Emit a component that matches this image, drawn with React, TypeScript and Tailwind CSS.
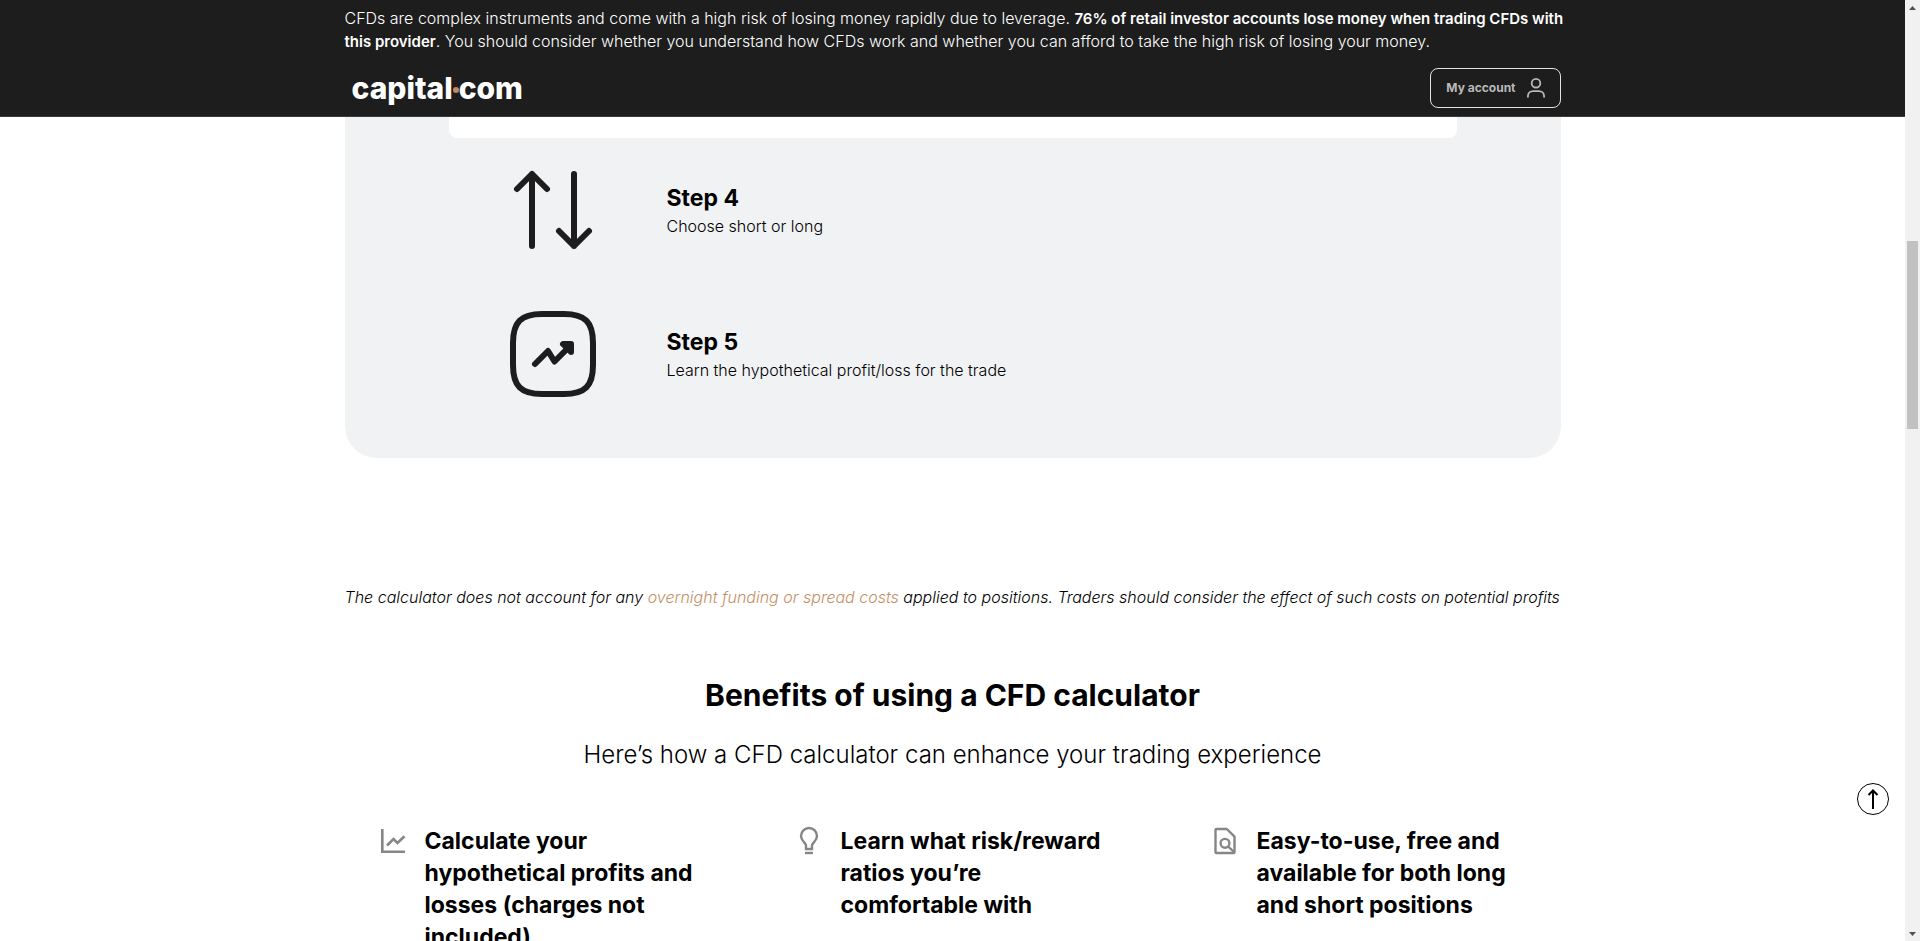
import type { ReactNode } from "react";

const CONTAINER = "mx-auto w-full max-w-[1216px]";

function Logo() {
  return (
    <a
      href="#home"
      aria-label="capital.com"
      className="flex items-center pl-[7px] text-[30px] leading-10 font-extrabold text-white"
    >
      capital
      <span className="mt-1 size-1.5 rounded-full bg-[#c48a5a]" />
      com
    </a>
  );
}

function Header() {
  return (
    <header className="shrink-0 border-b border-[#3a3a3a] bg-[#1d1d1d] pt-[7px] pb-2 text-white">
      <div className={CONTAINER}>
        <p className="text-base leading-[22px] font-light whitespace-nowrap">
          CFDs are complex instruments and come with a high risk of losing money rapidly due to leverage.{" "}
          <b className="text-[15px] font-semibold">
            76% of retail investor accounts lose money when trading CFDs with
            <br />
            this provider
          </b>
          . You should consider whether you understand how CFDs work and whether you can afford to take the high risk
          of losing your money.
        </p>
        <div className="mt-[15px] flex items-start justify-between">
          <Logo />
          <button
            type="button"
            className="flex h-10 items-center gap-2 rounded-lg border border-[#e2e2e2] pr-3 pl-[15px] text-xs font-bold text-[#b9b9b9]"
          >
            My account
            <svg viewBox="0 0 24 24" className="size-6" fill="none" stroke="currentColor" strokeWidth="1.8">
              <circle cx="12" cy="7.2" r="4.3" />
              <path d="M3.9 21.5v-1.2c0-3.2 2.4-5.2 5.2-5.2h5.8c2.8 0 5.2 2 5.2 5.2v1.2" />
            </svg>
          </button>
        </div>
      </div>
    </header>
  );
}

function Step({ icon, title, text }: { icon: ReactNode; title: string; text: string }) {
  return (
    <li className="flex items-center gap-[66px]">
      {icon}
      <div>
        <h3 className="text-[23px] leading-8 font-bold">{title}</h3>
        <p className="text-base leading-6 font-light">{text}</p>
      </div>
    </li>
  );
}

function ArrowsIcon() {
  return (
    <svg
      viewBox="0 0 96 96"
      className="size-24"
      fill="none"
      stroke="#1d1d1d"
      strokeWidth="6"
      strokeLinecap="round"
      strokeLinejoin="round"
    >
      <path d="M27 84V12M12 27l15-15 15 15" />
      <path d="M69 12v72M54 69l15 15 15-15" />
    </svg>
  );
}

function ChartBoxIcon() {
  return (
    <svg
      viewBox="0 0 96 96"
      className="size-24"
      fill="none"
      stroke="#1d1d1d"
      strokeWidth="6"
      strokeLinecap="round"
      strokeLinejoin="round"
    >
      <path d="M37 8h22C80 8 88 16 88 37v22c0 21-8 29-29 29H37C16 88 8 80 8 59V37C8 16 16 8 37 8Z" />
      <path d="M30 58l13-13 6.500 10.500L65 40" />
      <path d="M58 38h8v8z" fill="#1d1d1d" />
    </svg>
  );
}

const GREY_ICON = "size-8 shrink-0 text-[#868686]";

const FEATURES: { icon: ReactNode; lines: string[] }[] = [
  {
    icon: (
      <svg viewBox="0 0 32 32" className={GREY_ICON} fill="none" stroke="currentColor" strokeWidth="2.600">
        <path d="M5.300 4v22.700H28M10 20.500l6.500-6.500 4 4L27.500 11.300" />
      </svg>
    ),
    lines: ["Calculate your", "hypothetical profits and", "losses (charges not", "included)"],
  },
  {
    icon: (
      <svg viewBox="0 0 32 32" className={GREY_ICON} fill="none" stroke="currentColor" strokeWidth="2.400">
        <path d="M13 24v-3.500c0-2.500-5-4.500-5-9.500a8 8 0 0 1 16 0c0 5-5 7-5 9.500V24Z" />
        <path d="M12 28h8" />
      </svg>
    ),
    lines: ["Learn what risk/reward", "ratios you’re", "comfortable with"],
  },
  {
    icon: (
      <svg viewBox="0 0 32 32" className={GREY_ICON} fill="none" stroke="currentColor" strokeWidth="2.400">
        <path strokeLinejoin="round" d="M7.500 4h10.300l7.700 7.700V27a1 1 0 0 1-1 1h-17a1 1 0 0 1-1-1V5a1 1 0 0 1 1-1Z" />
        <circle cx="16" cy="18.300" r="4.400" />
        <path d="M19 21.300l6 5.700" />
      </svg>
    ),
    lines: ["Easy-to-use, free and", "available for both long", "and short positions"],
  },
];

function Feature({ icon, lines }: { icon: ReactNode; lines: string[] }) {
  return (
    <li className="flex items-start gap-4 px-8">
      {icon}
      <h3 className="text-[23px] leading-8 font-bold whitespace-nowrap">
        {lines.map((line) => (
          <span key={line} className="block">
            {line}
          </span>
        ))}
      </h3>
    </li>
  );
}

function Scrollbar() {
  return (
    <div aria-hidden="true" className="flex w-[15px] shrink-0 flex-col items-center justify-between bg-[#f1f1f1]">
      <svg viewBox="0 0 15 15" className="size-[15px]" fill="#505050">
        <path d="M4 10h7L7.500 6z" />
      </svg>
      <div className="flex w-full flex-1 flex-col items-center">
        <div className="flex-[226]" />
        <div className="w-[11px] flex-[188] bg-[#c1c1c1]" />
        <div className="flex-[497]" />
      </div>
      <svg viewBox="0 0 15 15" className="size-[15px]" fill="#505050">
        <path d="M4 6h7L7.500 10z" />
      </svg>
    </div>
  );
}

export default function App() {
  return (
    <div className="flex h-screen overflow-hidden bg-white font-[Inter,sans-serif] text-black">
      <div className="flex min-w-0 flex-1 flex-col overflow-hidden">
        <Header />
        <main className={`${CONTAINER} min-h-0 flex-1 overflow-hidden`}>
          <section className="rounded-b-[32px] bg-[#f1f2f4] pb-14">
            <div className="mx-[104px] h-[21px] rounded-b-lg bg-white" />
            <ul className="flex flex-col gap-12 pt-6 pl-40">
              <Step icon={<ArrowsIcon />} title="Step 4" text="Choose short or long" />
              <Step icon={<ChartBoxIcon />} title="Step 5" text="Learn the hypothetical profit/loss for the trade" />
            </ul>
          </section>

          <p className="mt-32 text-base leading-[22px] font-light whitespace-nowrap italic">
            The calculator does not account for any{" "}
            <a href="#costs" className="text-[#c48f66]">
              overnight funding or spread costs
            </a>{" "}
            applied to positions. Traders should consider the effect of such costs on potential profits
          </p>

          <section>
            <h2 className="mt-[67px] text-center text-[30px] leading-10 font-bold">
              Benefits of using a CFD calculator
            </h2>
            <p className="mt-6 text-center text-2xl leading-8 font-light">
              Here’s how a CFD calculator can enhance your trading experience
            </p>
            <ul className="mt-[54px] grid grid-cols-3 gap-8">
              {FEATURES.map((feature) => (
                <Feature key={feature.lines[0]} {...feature} />
              ))}
            </ul>
          </section>
        </main>
      </div>

      <button
        type="button"
        aria-label="Back to top"
        className="absolute right-[31px] bottom-[126px] flex size-8 items-center justify-center rounded-full border border-black bg-white"
      >
        <svg viewBox="0 0 24 24" className="size-6" fill="none" stroke="currentColor" strokeWidth="2">
          <path d="M12 22V4M7.500 8 12 3.500 16.500 8" />
        </svg>
      </button>
      <Scrollbar />
    </div>
  );
}
